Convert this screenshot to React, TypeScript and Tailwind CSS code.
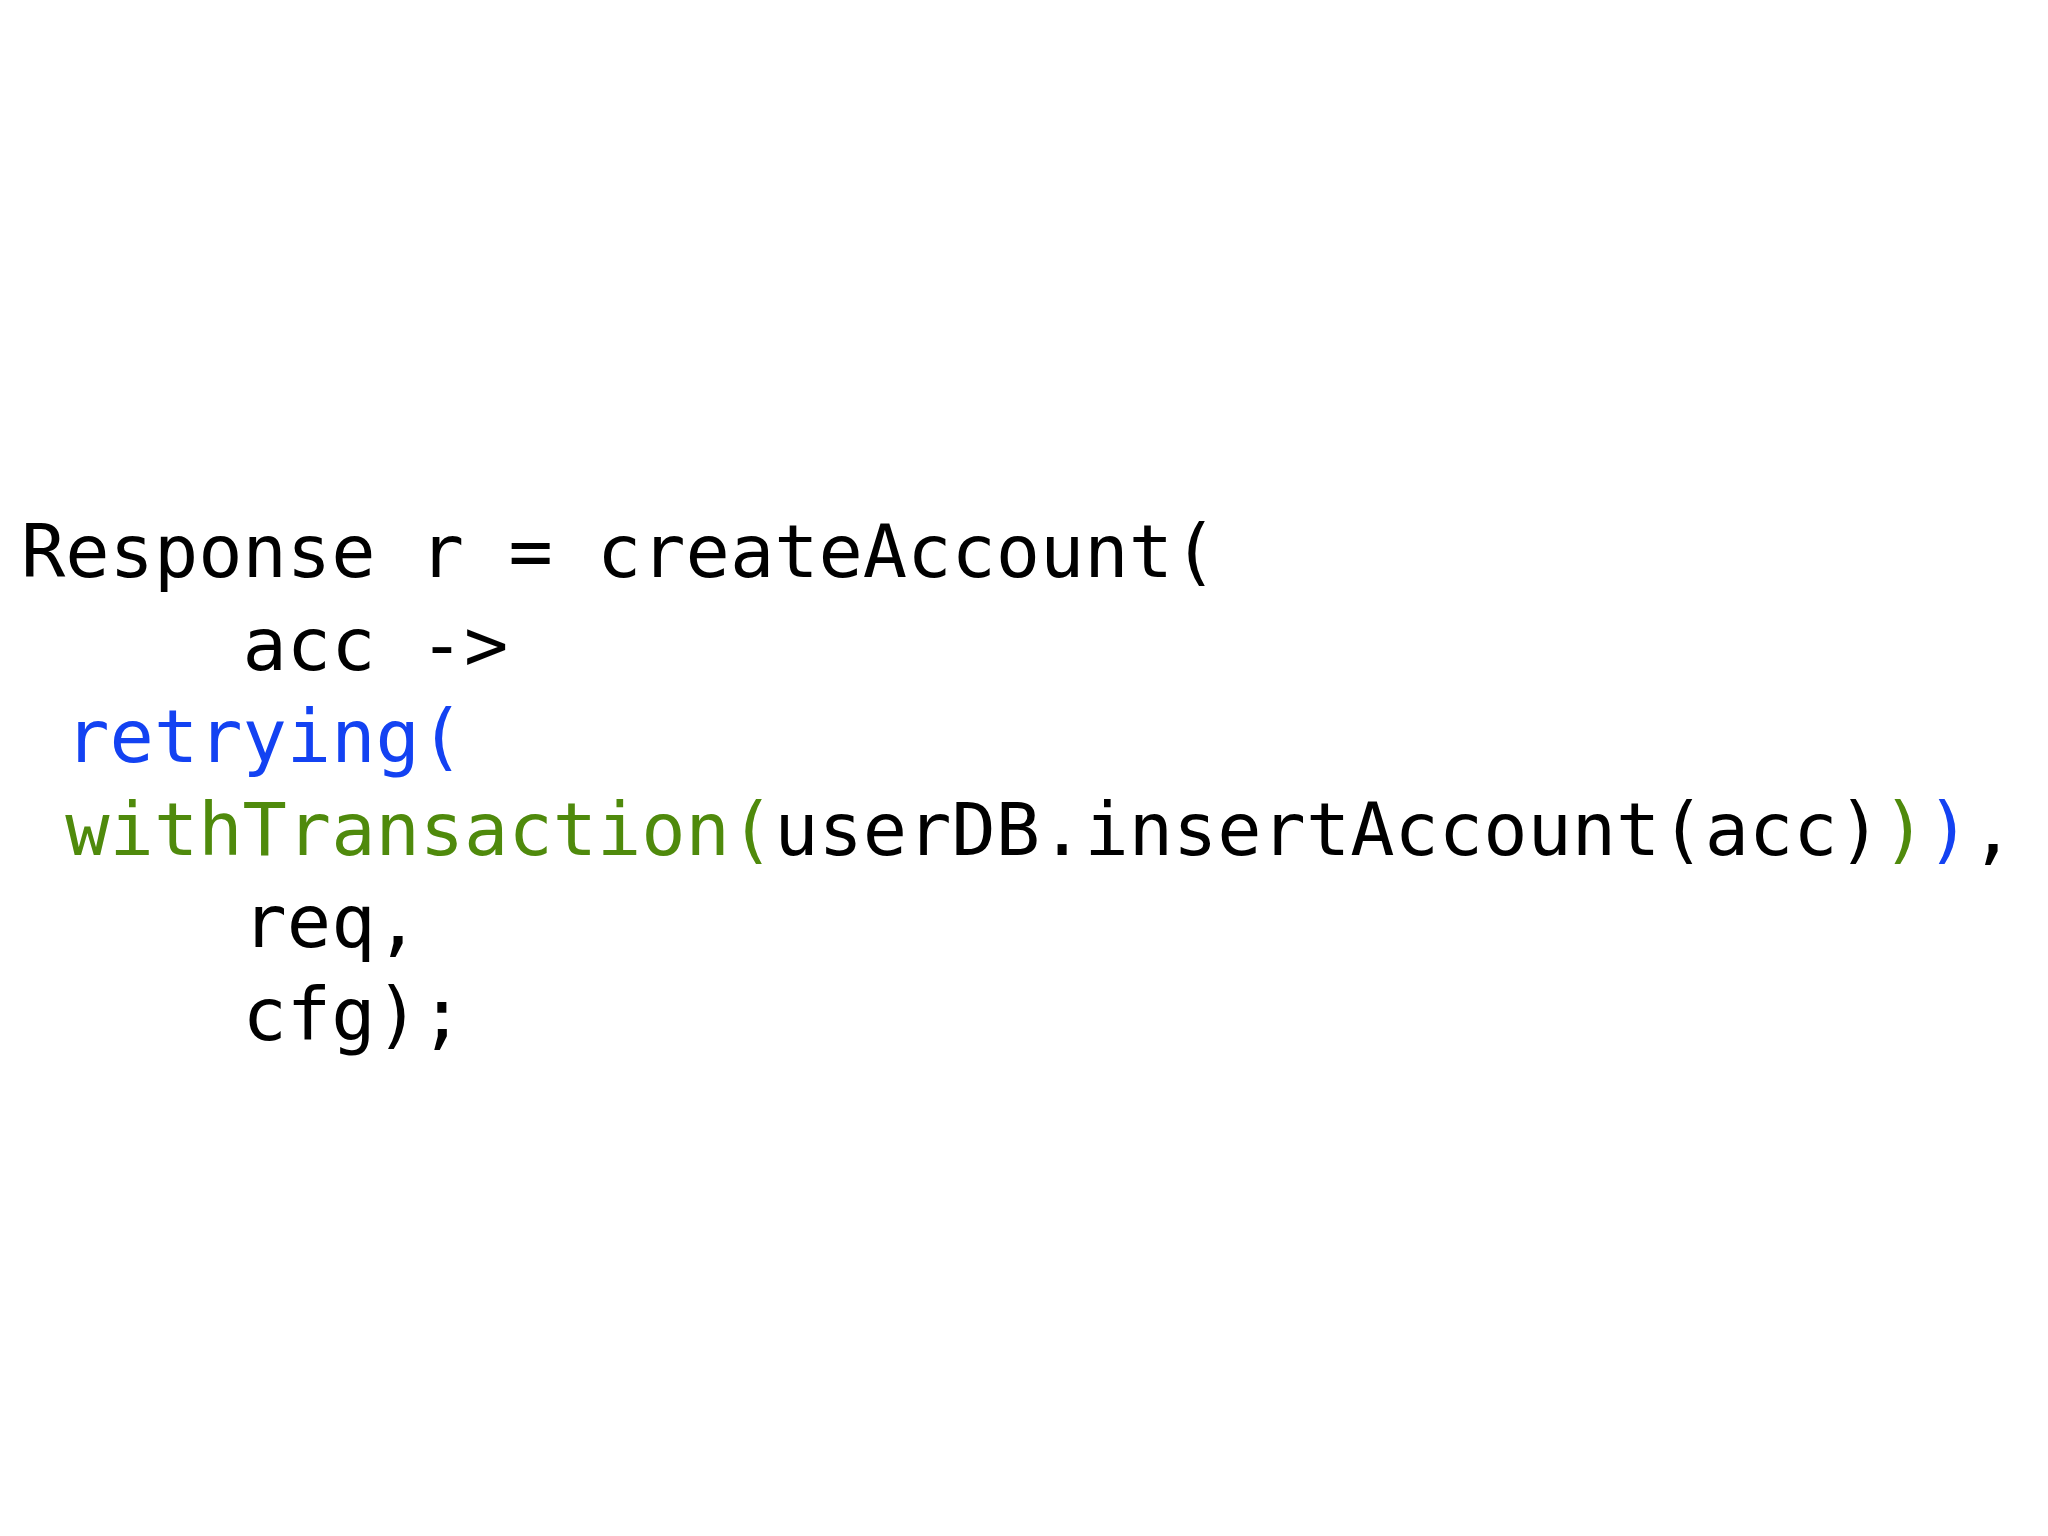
const blue = "text-[#1342f2]";
const green = "text-[#4f8a0c]";

export default function App() {
  return (
    <main className="min-h-screen w-[2048px] h-[1536px] overflow-hidden bg-white pt-[506px] pl-[21px]">
      <pre className="font-['DejaVu_Sans_Mono','Liberation_Mono',monospace] text-[73.6px] leading-[92.6px] text-black whitespace-pre">
        <div>Response r = createAccount(</div>
        <div>{"     "}acc -&gt;</div>
        <div className={blue}>{" "}retrying(</div>
        <div>
          {" "}
          <span className={green}>withTransaction(</span>
          userDB.insertAccount(acc)
          <span className={green}>)</span>
          <span className={blue}>)</span>,
        </div>
        <div>{"     "}req,</div>
        <div>{"     "}cfg);</div>
      </pre>
    </main>
  );
}
